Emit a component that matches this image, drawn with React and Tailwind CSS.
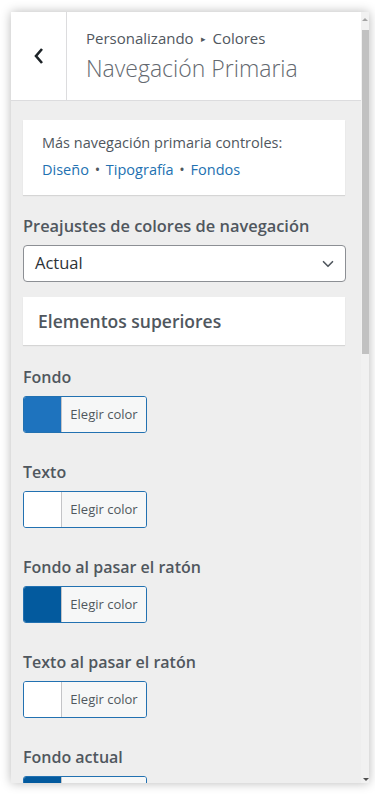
import { ChevronDown } from 'lucide-react'

const font = { fontFamily: '"Open Sans", "Noto Sans", sans-serif' }

const colorControls = [
  { label: 'Fondo', swatch: 'bg-[#1e73be]' },
  { label: 'Texto', swatch: 'bg-white' },
  { label: 'Fondo al pasar el ratón', swatch: 'bg-[#035a9e]' },
  { label: 'Texto al pasar el ratón', swatch: 'bg-white' },
  { label: 'Fondo actual', swatch: 'bg-[#035a9e]' },
]

function ColorControl({ label, swatch }) {
  return (
    <div className="pb-[27px]">
      <p className="text-[16px] font-semibold leading-[24px] text-[#50575e]">{label}</p>
      <div className="mt-[7px] flex h-[37px] w-[124px] overflow-hidden rounded-[3px] border border-[#2271b1]">
        <span className={`w-[38px] shrink-0 border-r border-[#c3c4c7] ${swatch}`} />
        <span className="flex flex-1 items-center justify-center bg-[#f6f7f7] text-[13px] text-[#50575e]">
          Elegir color
        </span>
      </div>
    </div>
  )
}

export default function App() {
  return (
    <div className="h-[795px] w-[375px] overflow-hidden bg-white pl-[11px] pt-[12px]" style={font}>
      <div className="flex h-[771px] w-[358px] overflow-hidden bg-[#eeeeee] shadow-[0_0_10px_rgba(0,0,0,0.28)]">
        <div className="w-[350px] shrink-0">
          <div className="flex h-[89px] border-b border-[#dcdcde] bg-white">
            <div className="flex w-[56px] shrink-0 items-center justify-center border-r border-[#dcdcde]">
              <svg width="12" height="18" viewBox="0 0 12 18">
                <polyline points="9,2 3,9 9,16" fill="none" stroke="#1d2327" strokeWidth="2.6" />
              </svg>
            </div>
            <div className="flex flex-col pl-[19px] pt-[15px]">
              <p className="text-[15px] leading-[22px] text-[#50575e]">
                Personalizando <span className="mx-[3px] align-[2px] text-[9px]">▸</span> Colores
              </p>
              <p className="mt-[3px] text-[23px] font-light leading-[30px] text-[#646970]">
                Navegación Primaria
              </p>
            </div>
          </div>

          <div className="pl-[12px] pr-[16px] pt-[19px]">
            <div className="h-[75px] bg-white px-[19px] pt-[12px] shadow-[0_1px_1px_rgba(0,0,0,0.1)]">
              <p className="text-[14.5px] leading-[22px] text-[#50575e]">Más navegación primaria controles:</p>
              <p className="mt-[5px] text-[14.5px] leading-[22px] text-[#2271b1]">
                Diseño <span className="mx-[2px] text-[#50575e]">•</span> Tipografía{' '}
                <span className="mx-[2px] text-[#50575e]">•</span> Fondos
              </p>
            </div>

            <p className="mt-[19px] text-[16.4px] font-semibold leading-[24px] text-[#50575e]">
              Preajustes de colores de navegación
            </p>
            <div className="mt-[7px] flex h-[37px] w-[323px] items-center justify-between rounded-[4px] border border-[#8c8f94] bg-white pl-[11px] pr-[8px]">
              <span className="text-[16.5px] text-[#2c3338]">Actual</span>
              <ChevronDown size={18} strokeWidth={2.2} className="text-[#50575e]" />
            </div>

            <div className="mt-[15px] flex h-[48px] items-center bg-white pl-[15px] shadow-[0_1px_1px_rgba(0,0,0,0.1)]">
              <span className="text-[17.5px] font-semibold text-[#50575e]">Elementos superiores</span>
            </div>

            <div className="mt-[20px]">
              {colorControls.map((c) => (
                <ColorControl key={c.label} {...c} />
              ))}
            </div>
          </div>
        </div>

        <div className="relative w-[8px] shrink-0 bg-[#f1f1f1]">
          <div className="mx-auto mt-[6px] h-0 w-0 border-x-[3px] border-b-[3px] border-x-transparent border-b-[#a3a3a3]" />
          <div className="ml-[1px] mt-[9px] h-[324px] w-[7px] bg-[#c1c1c1]" />
          <div className="absolute bottom-[2px] left-[2px] h-0 w-0 border-x-[3px] border-t-[3px] border-x-transparent border-t-[#505050]" />
        </div>
      </div>
    </div>
  )
}
